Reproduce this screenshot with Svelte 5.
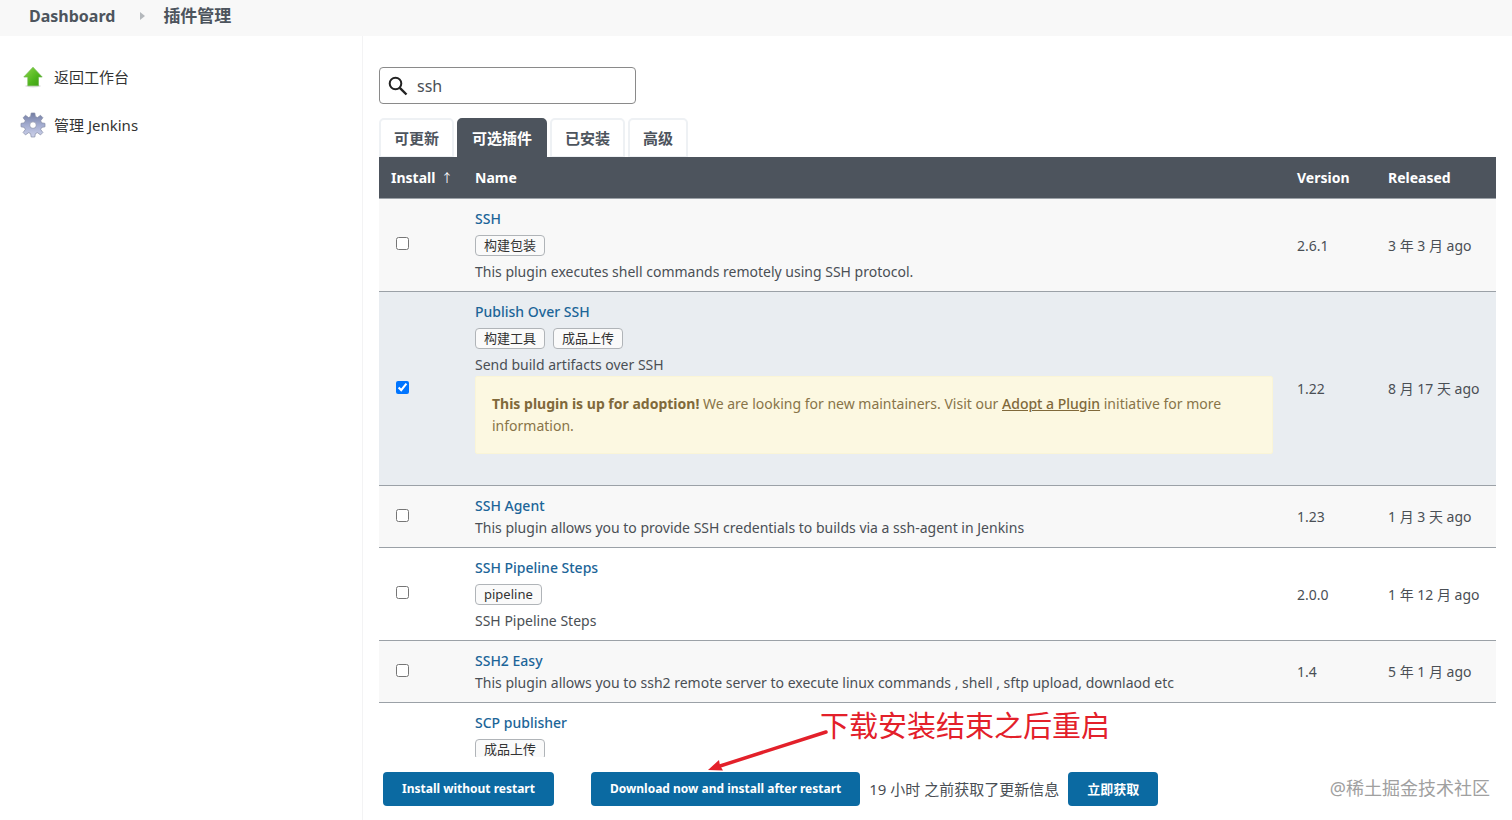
<script>
	const tabs = ['可更新', '可选插件', '已安装', '高级'];
	const activeTab = '可选插件';

	let query = $state('ssh');

	let plugins = $state([
		{
			name: 'SSH',
			tags: ['构建包装'],
			text: 'This plugin executes shell commands remotely using SSH protocol.',
			version: '2.6.1',
			released: '3 年 3 月 ago',
			checked: false
		},
		{
			name: 'Publish Over SSH',
			tags: ['构建工具', '成品上传'],
			text: 'Send build artifacts over SSH',
			adoption: true,
			version: '1.22',
			released: '8 月 17 天 ago',
			checked: true
		},
		{
			name: 'SSH Agent',
			tags: [],
			text: 'This plugin allows you to provide SSH credentials to builds via a ssh-agent in Jenkins',
			version: '1.23',
			released: '1 月 3 天 ago',
			checked: false
		},
		{
			name: 'SSH Pipeline Steps',
			tags: ['pipeline'],
			text: 'SSH Pipeline Steps',
			version: '2.0.0',
			released: '1 年 12 月 ago',
			checked: false
		},
		{
			name: 'SSH2 Easy',
			tags: [],
			text: 'This plugin allows you to ssh2 remote server to execute linux commands , shell , sftp upload, downlaod etc',
			version: '1.4',
			released: '5 年 1 月 ago',
			checked: false
		},
		{
			name: 'SCP publisher',
			tags: ['成品上传'],
			text: '',
			version: '',
			released: '',
			checked: false
		}
	]);
</script>

<div class="page">
	<nav class="breadcrumbs" aria-label="Breadcrumb">
		<a href="#dashboard">Dashboard</a>
		<svg width="5" height="8" viewBox="0 0 5 8" aria-hidden="true"><path d="M0 0l5 4-5 4z" fill="#b4b8bc" /></svg>
		<a href="#plugins">插件管理</a>
	</nav>

	<div class="body">
		<aside class="side">
			<a href="#back">
				<svg width="26" height="26" viewBox="0 0 26 26" aria-hidden="true">
					<defs>
						<linearGradient id="up" x1="0" y1="0" x2="1" y2="1">
							<stop offset="0" stop-color="#8fd84a" />
							<stop offset="0.6" stop-color="#4fb51c" />
							<stop offset="1" stop-color="#3c9a12" />
						</linearGradient>
					</defs>
					<ellipse cx="13" cy="22" rx="8" ry="1.5" fill="#000" opacity="0.12" />
					<path d="M13 3.200l9.200 9.800h-3.700v8.700H7.800V13H3.800z" fill="url(#up)" stroke="#6fb84c" stroke-width="0.700" stroke-linejoin="round" />
				</svg>
				返回工作台
			</a>
			<a href="#manage">
				<svg width="26" height="26" viewBox="0 0 26 26" aria-hidden="true">
					<defs>
						<linearGradient id="cog" x1="0" y1="0" x2="0" y2="1">
							<stop offset="0" stop-color="#737da3" />
							<stop offset="0.5" stop-color="#a3acd0" />
							<stop offset="1" stop-color="#cdd2ea" />
						</linearGradient>
					</defs>
					<path
						fill="url(#cog)"
						stroke="#858da6"
						stroke-width="0.700"
						stroke-linejoin="round"
						fill-rule="evenodd"
						d="M11.200 1h3.600l.6 3.600 2.100.9 3-2.200 2.400 2.400-2.200 3 .9 2.100 3.400.6v3.400l-3.400.6-.9 2.100 2.200 3-2.400 2.400-3-2.200-2.100.9-.6 3.400h-3.600l-.6-3.400-2.100-.9-3 2.200-2.400-2.400 2.200-3-.9-2.100L1 14.800v-3.400l3.400-.6.9-2.100-2.200-3 2.400-2.400 3 2.200 2.100-.9zM13 9.800a3.300 3.300 0 1 0 0 6.600 3.300 3.300 0 0 0 0-6.600z"
					/>
				</svg>
				管理 Jenkins
			</a>
		</aside>

		<main>
			<div class="scroll">
				<label class="search">
					<svg width="20" height="20" viewBox="0 0 20 20" aria-hidden="true">
						<circle cx="7.500" cy="7.500" r="5.800" fill="none" stroke="#222" stroke-width="2" />
						<path d="M11.800 11.800l6.700 6.700" stroke="#222" stroke-width="2.400" />
					</svg>
					<input type="text" aria-label="Search" bind:value={query} />
				</label>

				<div class="tabs">
					{#each tabs as tab}
						<a href="#tab" class="tab" class:active={tab === activeTab}>{tab}</a>
					{/each}
				</div>

				<table>
					<thead>
						<tr>
							<th class="install">Install <span class="sort">↑</span></th>
							<th>Name</th>
							<th class="version">Version</th>
							<th class="released">Released</th>
						</tr>
					</thead>
					<tbody>
						{#each plugins as plugin}
							<tr class:checked={plugin.checked}>
								<td class="install">
									<input type="checkbox" aria-label={plugin.name} bind:checked={plugin.checked} />
								</td>
								<td>
									<div><a class="name" href="#plugin">{plugin.name}</a></div>
									{#if plugin.tags.length}
										<div class="tags">
											{#each plugin.tags as tag}
												<a class="tag" href="#tag">{tag}</a>
											{/each}
										</div>
									{/if}
									<div class="excerpt">{plugin.text}</div>
									{#if plugin.adoption}
										<div class="alert">
											<strong>This plugin is up for adoption!</strong> We are looking for new maintainers. Visit
											our <a href="#adopt">Adopt a Plugin</a> initiative for more information.
										</div>
									{/if}
								</td>
								<td>{plugin.version}</td>
								<td class="released">{plugin.released}</td>
							</tr>
						{/each}
					</tbody>
				</table>
			</div>

			<div class="actions">
				<button type="button" class="first">Install without restart</button>
				<button type="button">Download now and install after restart</button>
				<span>19 小时 之前获取了更新信息</span>
				<button type="button" class="check">立即获取</button>

				<div class="note">
					<svg width="120" height="44" viewBox="0 0 120 44" aria-hidden="true">
						<path d="M118 4L12 38" stroke="#e3202a" stroke-width="3.500" stroke-linecap="round" />
						<path d="M0 42l11-10 1 5.500 3 5z" fill="#e3202a" />
					</svg>
					<span>下载安装结束之后重启</span>
				</div>
			</div>
		</main>
	</div>

	<div class="watermark">@稀土掘金技术社区</div>
</div>

<style>
	:global(body) {
		margin: 0;
		background: #fff;
		color: #4a4f55;
		font-family: 'Noto Sans', 'Noto Sans CJK SC', sans-serif;
		font-size: 14px;
		line-height: 22px;
	}

	.page {
		position: relative;
		display: flex;
		flex-direction: column;
		height: 100vh;
		overflow: hidden;
	}

	a {
		color: inherit;
		text-decoration: none;
	}

	.breadcrumbs {
		display: flex;
		align-items: center;
		gap: 25px;
		box-sizing: border-box;
		height: 36px;
		padding: 0 29px 4px;
		background: #f8f8f8;
		color: #4d545d;
		font-size: 16px;
		font-weight: 700;
	}

	.breadcrumbs a:last-child {
		margin-left: -7px;
		font-size: 17px;
	}

	.body {
		display: flex;
		flex: 1;
		min-height: 0;
	}

	.side {
		display: flex;
		flex-direction: column;
		gap: 22px;
		box-sizing: border-box;
		width: 363px;
		flex-shrink: 0;
		padding: 28px 20px;
		border-right: 1px solid #f3f3f4;
		color: #333;
		font-size: 15px;
	}

	.side a {
		display: flex;
		align-items: center;
		gap: 8px;
	}

	main {
		display: flex;
		flex-direction: column;
		flex: 1;
		min-width: 0;
		padding: 0 16px;
	}

	.scroll {
		flex: 1;
		min-height: 0;
		padding-top: 31px;
		overflow: auto;
		scrollbar-width: none;
	}

	.search {
		display: flex;
		align-items: center;
		gap: 9px;
		box-sizing: border-box;
		width: 257px;
		height: 37px;
		padding: 0 8px;
		border: 1px solid #8a8a8a;
		border-radius: 4px;
	}

	.search input {
		flex: 1;
		min-width: 0;
		padding: 0;
		border: 0;
		outline: 0;
		background: none;
		color: #4a4f55;
		font: inherit;
		font-size: 16px;
	}

	.tabs {
		display: flex;
		gap: 3px;
		margin-top: 14px;
	}

	.tab {
		box-sizing: border-box;
		height: 39px;
		padding: 7px 13px;
		border: 2px solid #eef1f4;
		border-bottom-width: 1px;
		border-radius: 5px 5px 0 0;
		color: #4d545d;
		font-size: 15px;
		font-weight: 700;
	}

	.tab.active {
		border-color: #4d545d;
		background: #4d545d;
		color: #fff;
	}

	table {
		width: 100%;
		border-collapse: collapse;
	}

	th {
		height: 41px;
		padding: 0 12px;
		background: #4d545d;
		color: #fff;
		font-weight: 700;
		text-align: left;
		white-space: nowrap;
	}

	.sort {
		margin-left: 2px;
		font-size: 12px;
		font-weight: 400;
		line-height: 1;
	}

	.install {
		box-sizing: border-box;
		width: 84px;
		padding-right: 0;
	}

	.version {
		box-sizing: border-box;
		width: 91px;
	}

	.released {
		box-sizing: border-box;
		width: 120px;
		padding-right: 0;
		white-space: nowrap;
	}

	td {
		padding: 9px 12px 8px;
		border-top: 1px solid #9ba1a7;
	}

	tbody tr:nth-child(odd) {
		background: #f8f8f8;
	}

	tbody tr.checked {
		background: #e9edf1;
	}

	td input {
		display: block;
		width: 13px;
		height: 13px;
		margin: 0 5px 4px;
	}

	.name {
		color: #1c6598;
		font-weight: 500;
	}

	.tags {
		display: flex;
		gap: 8px;
		padding: 5px 0;
	}

	.tag {
		padding: 0 8px;
		border: 1px solid #b0b4b8;
		border-radius: 4px;
		background: #fafafa;
		color: #333;
		font-size: 13px;
		line-height: 19px;
	}

	.excerpt:empty {
		min-height: 66px;
	}

	.alert {
		margin-bottom: 23px;
		padding: 16px;
		border: 1px solid #faf5d7;
		border-radius: 2px;
		background: #fcf8e1;
		color: #887448;
	}

	.alert strong {
		color: #80693a;
	}

	.alert a {
		color: #80693a;
		font-weight: 500;
		text-decoration: underline;
	}

	.actions {
		position: relative;
		display: flex;
		align-items: center;
		gap: 9px;
		padding: 15px 4px 14px;
		font-size: 15px;
	}

	button {
		height: 34px;
		padding: 0 19px;
		border: 0;
		border-radius: 4px;
		background: #0b6aa2;
		color: #fff;
		font: inherit;
		font-size: 12px;
		font-weight: 700;
	}

	.first {
		margin-right: 28px;
	}

	.check {
		font-size: 13px;
	}

	.note {
		position: absolute;
		left: 329px;
		bottom: 48px;
		display: flex;
		align-items: flex-start;
		color: #e3202a;
		font-size: 29px;
		line-height: 36px;
	}

	.note svg {
		margin: 20px -8px 0 0;
	}

	.watermark {
		position: absolute;
		right: 22px;
		bottom: 20px;
		color: #a0a0a0;
		font-size: 18px;
		line-height: 24px;
	}
</style>
